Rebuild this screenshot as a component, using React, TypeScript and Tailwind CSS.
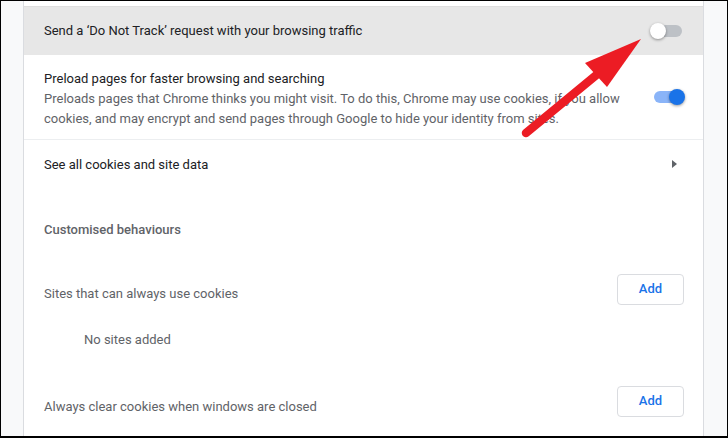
import React from "react";

function Toggle({ on }: { on: boolean }) {
  return (
    <div className="relative w-[36px] h-[16px] flex items-center">
      <div className={`ml-[4px] w-[28px] h-[12px] rounded-full ${on ? "bg-[#8ab4f8]" : "bg-[#bdc1c6]"}`} />
      <div
        className={`absolute top-0 w-[16px] h-[16px] rounded-full shadow-[0_1px_3px_rgba(0,0,0,0.4)] ${
          on ? "right-[1px] bg-[#1a73e8]" : "left-0 bg-white"
        }`}
      />
    </div>
  );
}

function AddButton() {
  return (
    <button className="w-[67px] h-[31px] rounded-[4px] border border-[#dadce0] bg-white text-[13px] font-medium text-[#1a73e8]">
      Add
    </button>
  );
}

export default function App() {
  return (
    <div
      className="relative w-[728px] h-[438px] bg-black pt-px pl-px pr-px pb-[2px] overflow-hidden"
      style={{ fontFamily: "Roboto, 'Liberation Sans', sans-serif" }}
    >
      <div className="flex h-full bg-[#f8f9fa]">
        <div className="w-[22px]" />
        <div className="w-[681px] h-full bg-white border-l border-r border-[#dadce0] pt-[5px] text-[13px]">
          {/* Do Not Track */}
          <div className="h-[49px] bg-[#e7e7e7] border-t border-[#dedede] flex items-center justify-between pl-[20px] pr-[17px]">
            <span className="text-[#202124]">Send a ‘Do Not Track’ request with your browsing traffic</span>
            <Toggle on={false} />
          </div>

          {/* Preload */}
          <div className="h-[85px] flex items-center justify-between pl-[20px] pr-[17px] border-b border-[#eceef0]">
            <div className="max-w-[592px] leading-[20px] pt-[3px]">
              <div className="text-[#202124]">Preload pages for faster browsing and searching</div>
              <div className="text-[#5f6368]">
                Preloads pages that Chrome thinks you might visit. To do this, Chrome may use cookies, if you allow
                cookies, and may encrypt and send pages through Google to hide your identity from sites.
              </div>
            </div>
            <Toggle on={true} />
          </div>

          {/* See all cookies */}
          <div className="h-[48px] flex items-center justify-between pl-[20px] pr-[26px]">
            <span className="text-[#202124] pt-[2px]">See all cookies and site data</span>
            <div className="w-0 h-0 border-t-[4px] border-b-[4px] border-l-[5px] border-t-transparent border-b-transparent border-l-[#5f6368]" />
          </div>

          <div className="h-[81px] flex items-center pl-[20px]">
            <span className="font-medium text-[#5f6368] pt-[2px]">Customised behaviours</span>
          </div>

          <div className="h-[40px] flex items-center justify-between pl-[20px] pr-[19px]">
            <span className="text-[#5f6368] pt-[10px]">Sites that can always use cookies</span>
            <AddButton />
          </div>

          <div className="h-[58px] flex items-center pl-[60px]">
            <span className="text-[#5f6368] pt-[4px]">No sites added</span>
          </div>

          <div className="h-[68px] flex items-center justify-between pl-[20px] pr-[19px]">
            <span className="text-[#5f6368] pt-[12px]">Always clear cookies when windows are closed</span>
            <AddButton />
          </div>
        </div>
      </div>

      {/* red annotation arrow */}
      <svg className="absolute left-0 top-0" width="728" height="438" viewBox="0 0 728 438">
        <line x1="526" y1="133" x2="600" y2="72" stroke="#ec1c24" strokeWidth="8.5" strokeLinecap="round" />
        <polygon points="641,39 585,63 607,87" fill="#ec1c24" />
      </svg>
    </div>
  );
}
